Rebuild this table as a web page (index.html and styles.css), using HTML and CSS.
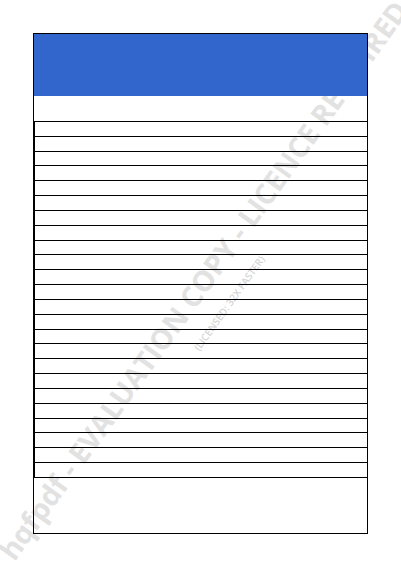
FILE: index.html
```html
<!DOCTYPE html>
<html lang="en">
<head>
<meta charset="utf-8">
<title>Form</title>
<link rel="stylesheet" href="styles.css">
</head>
<body>
<div class="page">
  <div class="sheet">
    <div class="banner"></div>
    <div class="gap"></div>
    <div class="rows">
      <div class="row"></div><div class="row"></div><div class="row"></div><div class="row"></div>
      <div class="row"></div><div class="row"></div><div class="row"></div><div class="row"></div>
      <div class="row"></div><div class="row"></div><div class="row"></div><div class="row"></div>
      <div class="row"></div><div class="row"></div><div class="row"></div><div class="row"></div>
      <div class="row"></div><div class="row"></div><div class="row"></div><div class="row"></div>
      <div class="row"></div><div class="row"></div><div class="row"></div><div class="row"></div>
    </div>
    <div class="footer"></div>
  </div>
</div>
<div class="watermark">hqfpdf - EVALUATION COPY - LICENCE REQUIRED</div>
<div class="watermark-sub">(LICENSED: 32X FASTER)</div>
</body>
</html>
```

FILE: styles.css
```css
html {
  background: #ffffff;
}

html, body {
  margin: 0;
  padding: 0;
  font-family: "Open Sans", "Liberation Sans", sans-serif;
}

.page {
  padding: 33px 0 0 33px;
}

.sheet {
  box-sizing: border-box;
  width: 335px;
  height: 501px;
  border: 1px solid #000;
  display: flex;
  flex-direction: column;
}

.banner {
  height: 62px;
  background: #3366cc;
  flex: none;
}

.gap {
  height: 25px;
  flex: none;
}

.rows {
  flex: none;
  display: flex;
  flex-direction: column;
  border-left: 1px solid #000;
}

.row {
  box-sizing: border-box;
  height: 14.833px;
  border-top: 1px solid #000;
}

.footer {
  flex: 1;
  border-top: 1px solid #000;
}

.watermark {
  position: absolute;
  left: 203px;
  top: 280px;
  transform: translate(-50%, -50%) rotate(-54.4deg);
  white-space: nowrap;
  font-size: 28.5px;
  font-weight: 700;
  color: #e2e2e2;
  z-index: -1;
}

.watermark-sub {
  position: absolute;
  left: 229px;
  top: 303px;
  transform: translate(-50%, -50%) rotate(-54.4deg);
  white-space: nowrap;
  font-size: 10px;
  font-weight: 600;
  color: #d6d6d6;
  z-index: -1;
}
```
